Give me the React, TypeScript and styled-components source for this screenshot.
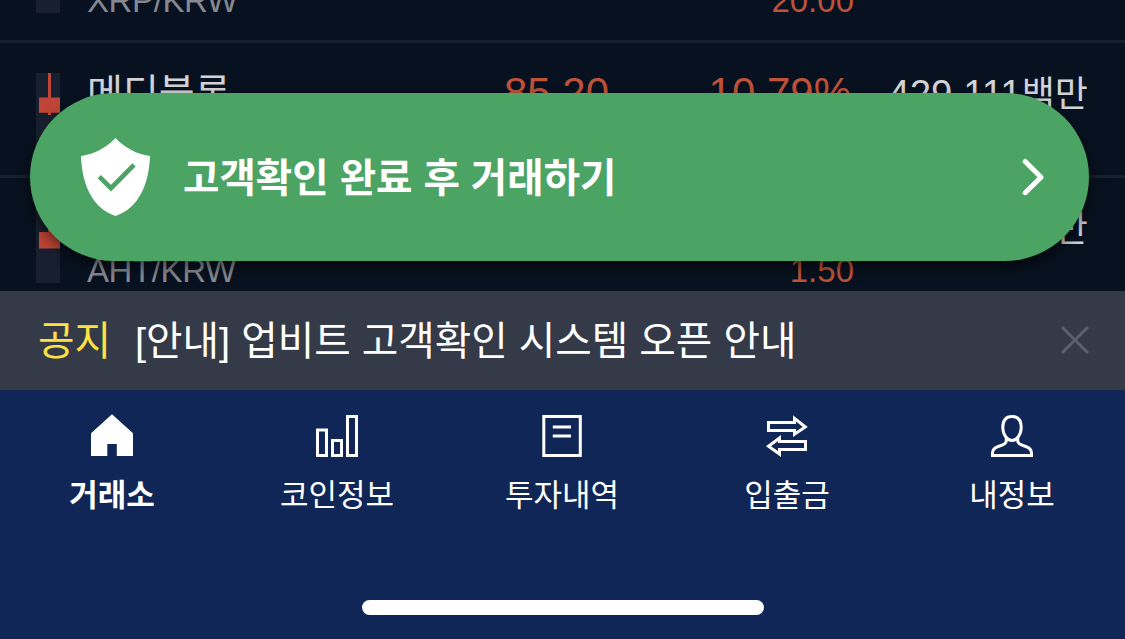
import type { ReactNode } from "react";
import styled, { createGlobalStyle } from "styled-components";

type Market = {
  name: string;
  pair: string;
  price: string;
  rate: string;
  diff: string;
  volume: string;
  candle: { high: number; low: number; top: number; bottom: number };
};

const MARKETS: Market[] = [
  {
    name: "리플",
    pair: "XRP/KRW",
    price: "1,005",
    rate: "2.03%",
    diff: "20.00",
    volume: "437,020",
    candle: { high: 10, low: 40, top: 18, bottom: 34 },
  },
  {
    name: "메디블록",
    pair: "MED/KRW",
    price: "85.20",
    rate: "10.79%",
    diff: "8.30",
    volume: "429,111",
    candle: { high: 0, low: 42, top: 24.5, bottom: 39.8 },
  },
  {
    name: "아하토큰",
    pair: "AHT/KRW",
    price: "18.30",
    rate: "8.93%",
    diff: "1.50",
    volume: "402,774",
    candle: { high: 8, low: 40, top: 24, bottom: 40.5 },
  },
];

const HomeIcon = () => (
  <NavIcon viewBox="0 0 45 44">
    <path d="M22 0.3 43 19.3V42H26.8V30H17.3V42H1V19.3Z" fill="#fff" />
  </NavIcon>
);

const ChartIcon = () => (
  <NavIcon viewBox="0 0 45 44">
    <path d="M2.5 16H11.5V41.5H2.5ZM17.5 26.5H26.5V41.5H17.5ZM32.5 2.5H41.5V41.5H32.5Z" />
  </NavIcon>
);

const HistoryIcon = () => (
  <NavIcon viewBox="0 0 45 44">
    <path d="M3.8 2.5H40.3V41.5H3.8ZM12.8 13H31M12.8 22H31" />
  </NavIcon>
);

const TransferIcon = () => (
  <NavIcon viewBox="0 0 45 44">
    <path d="M3.5 8.5H29.5V4.3L40.3 13 29.5 20.3V16.5H3.5Z" />
    <path d="M40.5 27.5H14.5V24L3.5 32.2 14.5 40V35.5H40.5Z" />
  </NavIcon>
);

const UserIcon = () => (
  <NavIcon viewBox="0 0 45 44">
    <path d="M22 2.5C15.6 2.5 12.8 7 12.8 13.5C12.8 20.5 17.2 26.5 22 26.5C26.8 26.5 31.2 20.5 31.2 13.5C31.2 7 28.4 2.5 22 2.5Z" />
    <path d="M16.3 23V27C16.3 30 12.5 31 9.5 32C4.8 33.4 2.5 35.5 2.5 39V41.5H41.5V39C41.5 35.5 39.2 33.4 34.5 32C31.5 31 27.7 30 27.7 27V23" />
  </NavIcon>
);

const TABS: { label: string; icon: ReactNode; active?: boolean }[] = [
  { label: "거래소", icon: <HomeIcon />, active: true },
  { label: "코인정보", icon: <ChartIcon /> },
  { label: "투자내역", icon: <HistoryIcon /> },
  { label: "입출금", icon: <TransferIcon /> },
  { label: "내정보", icon: <UserIcon /> },
];

function MarketRow({ market }: { market: Market }) {
  const { high, low, top, bottom } = market.candle;

  return (
    <Row>
      <Candle viewBox="0 0 24 75">
        <rect x="12" y={high} width="3" height={low - high} />
        <rect x="3" y={top} width="21" height={bottom - top} />
      </Candle>
      <NameCell>
        <CoinName>{market.name}</CoinName>
        <Pair>{market.pair}</Pair>
      </NameCell>
      <Cell>
        <Figure>{market.price}</Figure>
      </Cell>
      <Cell>
        <Rate>{market.rate}</Rate>
        <Diff>{market.diff}</Diff>
      </Cell>
      <Cell>
        <Volume>
          {market.volume}
          <Unit>백만</Unit>
        </Volume>
      </Cell>
    </Row>
  );
}

export default function App() {
  return (
    <>
      <GlobalStyle />
      <Screen>
        <MarketList>
          <Rows>
            {MARKETS.map((m) => (
              <MarketRow key={m.pair} market={m} />
            ))}
          </Rows>
          <VerifyButton type="button">
            <Shield viewBox="0 0 70 78">
              <path
                d="M34.5 0C25.5 9.5 14 16 0 18C1 46 11 70 34.5 78C58 70 68 46 69 18C55 16 43.5 9.5 34.5 0Z"
                fill="#fff"
              />
              <path
                d="M18.3 38.7 30 50.2 53 26.9"
                fill="none"
                stroke="#4ba364"
                strokeWidth="4.6"
              />
            </Shield>
            <VerifyLabel>고객확인 완료 후 거래하기</VerifyLabel>
            <Chevron viewBox="0 0 22 38">
              <path d="M3.2 3.5 19 19.2 3.2 34.7" />
            </Chevron>
          </VerifyButton>
        </MarketList>

        <Notice>
          <NoticeTag>공지</NoticeTag>
          <NoticeText>[안내] 업비트 고객확인 시스템 오픈 안내</NoticeText>
          <CloseButton type="button" aria-label="닫기">
            <svg width="30" height="30" viewBox="0 0 30 30">
              <path d="M2 2 28 28M28 2 2 28" stroke="#5a606d" strokeWidth="3" />
            </svg>
          </CloseButton>
        </Notice>

        <TabBar>
          <Tabs>
            {TABS.map((tab) => (
              <Tab key={tab.label}>
                {tab.icon}
                <TabLabel $active={tab.active}>{tab.label}</TabLabel>
              </Tab>
            ))}
          </Tabs>
          <HomeIndicator />
        </TabBar>
      </Screen>
    </>
  );
}

/* --- Styled Components --- */

const GlobalStyle = createGlobalStyle`
  * {
    box-sizing: border-box;
  }

  body {
    margin: 0;
    background: #08111f;
    font-family: "Liberation Sans", "Noto Sans CJK KR", sans-serif;
  }

  button {
    border: none;
    padding: 0;
    background: none;
    font: inherit;
    cursor: pointer;
  }
`;

const Screen = styled.div`
  display: flex;
  flex-direction: column;
  width: 1125px;
  height: 639px;
  overflow: hidden;
`;

const MarketList = styled.div`
  position: relative;
  display: flex;
  flex-direction: column;
  height: 291px;
  overflow: hidden;
  background: #08111f;
`;

/* scrolled part way through the first row */
const Rows = styled.div`
  margin-top: -92px;
`;

const Row = styled.div`
  display: grid;
  grid-template-columns: 24px 271px 278px 245px 234px;
  height: 135px;
  padding: 30px 0 0 36px;
  border-bottom: 3px solid #18202e;
`;

const Candle = styled.svg`
  width: 24px;
  height: 75px;
  background: #18202f;
  fill: #bf4537;
`;

const Cell = styled.div`
  display: flex;
  flex-direction: column;
  align-items: flex-end;
  gap: 3px;
  white-space: nowrap;
`;

const NameCell = styled(Cell)`
  align-items: flex-start;
  padding-left: 27px;
`;

const CoinName = styled.span`
  height: 40px;
  font-size: 39px;
  line-height: 42px;
  color: #d2d3d6;
`;

const Figure = styled.span`
  font-size: 42px;
  line-height: 40px;
  color: #bf5238;
`;

const Rate = styled(Figure)`
  padding-right: 3px;
`;

const Volume = styled.span`
  font-size: 38.5px;
  line-height: 41px;
  color: #d2d3d6;
`;

const Unit = styled.span`
  font-size: 36px;
`;

const Sub = styled.span`
  font-size: 33px;
  line-height: 40px;
`;

const Pair = styled(Sub)`
  letter-spacing: -0.4px;
  color: #858890;
`;

const Diff = styled(Sub)`
  color: #bf5238;
`;

const VerifyButton = styled.button`
  position: absolute;
  top: 93px;
  left: 30px;
  display: flex;
  align-items: center;
  width: 1059px;
  height: 168px;
  padding: 0 45px 0 51px;
  border-radius: 84px;
  background: #4ba364;
  box-shadow: 0 6px 14px rgba(0, 0, 0, 0.5);
`;

const Shield = styled.svg`
  width: 70px;
  height: 78px;
`;

const VerifyLabel = styled.span`
  flex: 1;
  margin-left: 32px;
  padding-top: 2px;
  text-align: left;
  font-size: 39.6px;
  font-weight: 700;
  line-height: 60px;
  color: #fff;
`;

const Chevron = styled.svg`
  width: 22px;
  height: 38px;
  fill: none;
  stroke: #fff;
  stroke-width: 5;
  stroke-linecap: round;
  stroke-linejoin: round;
`;

const Notice = styled.div`
  display: flex;
  align-items: center;
  height: 99px;
  padding: 0 35px 0 38px;
  background: #353a48;
  font-size: 39.7px;
  line-height: 60px;
  color: #fff;
`;

const NoticeTag = styled.span`
  color: #ffe144;
`;

const NoticeText = styled.span`
  flex: 1;
  margin-left: 24px;
  white-space: nowrap;
`;

const CloseButton = styled.button`
  display: flex;
  padding-bottom: 2px;
`;

const TabBar = styled.nav`
  display: flex;
  flex-direction: column;
  align-items: center;
  justify-content: space-between;
  height: 249px;
  padding: 24px 0;
  background: #102657;
`;

const Tabs = styled.div`
  display: grid;
  grid-template-columns: repeat(5, 225px);
`;

const Tab = styled.button`
  display: flex;
  flex-direction: column;
  align-items: center;
  gap: 16px;
`;

const NavIcon = styled.svg`
  width: 45px;
  height: 44px;
  fill: none;
  stroke-width: 3;

  path:not([fill]) {
    stroke: #fff;
  }
`;

const TabLabel = styled.span<{ $active?: boolean }>`
  padding-right: 1px;
  font-size: 31px;
  font-weight: ${({ $active }) => ($active ? 700 : 400)};
  line-height: 44px;
  color: #fff;
`;

const HomeIndicator = styled.div`
  width: 402px;
  height: 15px;
  border-radius: 8px;
  background: #fff;
`;
